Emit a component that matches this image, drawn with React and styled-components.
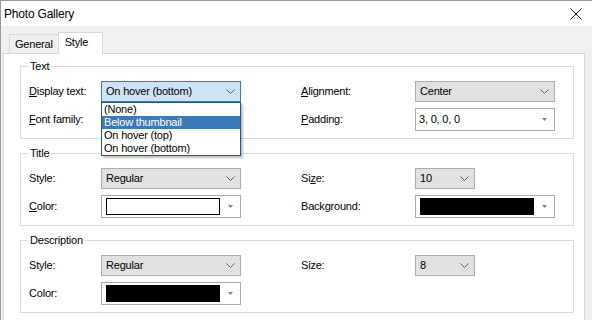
import React from "react";
import styled, { createGlobalStyle } from "styled-components";

const GlobalStyle = createGlobalStyle`
  html, body {
    margin: 0;
    padding: 0;
    background: #f0f0f0;
  }
  body {
    font-family: "Liberation Sans", Arial, sans-serif;
    font-size: 11px;
    letter-spacing: -0.2px;
    color: #000;
  }
`;

const Window = styled.div`
  width: 592px;
  height: 320px;
  box-sizing: border-box;
  overflow: hidden;
  background: #f0f0f0;
  border-left: 1px solid #9a9a9a;
  border-top: 1px solid #9a9a9a;
  display: flex;
  flex-direction: column;
`;

const TitleBar = styled.div`
  height: 25px;
  flex: none;
  background: #fff;
  display: flex;
  align-items: center;
  justify-content: space-between;
  padding: 0 10px 0 3px;
  font-size: 12px;
`;

const Body = styled.div`
  flex: 1;
  display: flex;
  flex-direction: column;
  padding: 6px 7px 0 2px;
`;

const TabStrip = styled.div`
  display: flex;
  align-items: flex-end;
  padding-left: 6px;
  position: relative;
  z-index: 1;
`;

const Tab = styled.div`
  box-sizing: border-box;
  border: 1px solid #d9d9d9;
  border-bottom: none;
  display: flex;
  align-items: center;
  height: ${(p) => (p.$active ? "22px" : "19px")};
  margin-bottom: ${(p) => (p.$active ? "-1px" : "0")};
  margin-left: ${(p) => (p.$active ? "-1px" : "0")};
  background: ${(p) => (p.$active ? "#fff" : "#f0f0f0")};
  padding-bottom: ${(p) => (p.$active ? "3px" : "0")};
  padding-right: ${(p) => (p.$active ? "14px" : "5px")};
  padding-left: ${(p) => (p.$active ? "6px" : "5px")};
`;

const Panel = styled.div`
  flex: 1;
  background: #fff;
  border: 1px solid #d9d9d9;
  border-bottom: none;
  padding: 6px 10px 0 16px;
  display: flex;
  flex-direction: column;
  gap: 8px;
`;

const Group = styled.fieldset`
  margin: 0;
  border: 1px solid #dcdcdc;
  padding: 7px 0 8px 8px;
  min-width: 0;
`;

const Caption = styled.legend`
  padding: 0 2px;
  margin-left: -1px;
  line-height: 13px;
`;

const Rows = styled.div`
  display: grid;
  grid-template-columns: 72px 200px 114px 140px;
  grid-auto-rows: 22px;
  row-gap: 6px;
  align-items: center;
`;

const Label = styled.span`
  white-space: nowrap;
  u {
    text-decoration: underline;
    text-underline-offset: 1px;
  }
`;

const Combo = styled.div`
  position: relative;
  box-sizing: border-box;
  width: ${(p) => p.$w || 140}px;
  height: ${(p) => p.$h || 21}px;
  display: flex;
  align-items: center;
  justify-content: space-between;
  padding: 0 5px 0 4px;
  border: 1px solid ${(p) => (p.$focus ? "#3a7bbf" : "#adadad")};
  background: ${(p) => (p.$focus ? "#cce4f7" : "#e1e1e1")};
`;

const EditCombo = styled.div`
  box-sizing: border-box;
  width: 140px;
  height: 23px;
  display: flex;
  align-items: center;
  gap: 8px;
  padding: 0 7px 0 3px;
  border: 1px solid #a9a9a9;
  background: #fff;
`;

const EditText = styled.span`
  flex: 1;
`;

const Swatch = styled.span`
  flex: 1;
  height: 15px;
  border: 1px solid #000;
  background: ${(p) => p.$color};
  margin-left: 1px;
`;

const DropList = styled.div`
  position: absolute;
  left: -1px;
  top: 20px;
  width: 140px;
  box-sizing: border-box;
  border: 1px solid #27557f;
  background: #fff;
  box-shadow: 2px 2px 2px rgba(0, 0, 0, 0.25);
  z-index: 5;
`;

const DropItem = styled.div`
  height: 13px;
  line-height: 13px;
  padding-left: 2px;
  color: ${(p) => (p.$sel ? "#fff" : "#000")};
  background: ${(p) => (p.$sel ? "#3b79b7" : "transparent")};
`;

const Chevron = () => (
  <svg width="9" height="5" viewBox="0 0 9 5">
    <polyline points="0.5,0.5 4.5,4.5 8.5,0.5" fill="none" stroke="#606060" strokeWidth="1" />
  </svg>
);

const Caret = () => (
  <svg width="5" height="3" viewBox="0 0 5 3">
    <polygon points="0,0 5,0 2.5,3" fill="#808080" />
  </svg>
);

const CloseIcon = () => (
  <svg width="12" height="12" viewBox="0 0 12 12">
    <path d="M0.5 0.5 L11.5 11.5 M11.5 0.5 L0.5 11.5" stroke="#111" strokeWidth="1" />
  </svg>
);

const Select = ({ value, w, focus, children }) => (
  <Combo $w={w} $focus={focus}>
    <span>{value}</span>
    <Chevron />
    {children}
  </Combo>
);

const ColorPick = ({ color }) => (
  <EditCombo>
    <Swatch $color={color} />
    <Caret />
  </EditCombo>
);

const options = ["(None)", "Below thumbnail", "On hover (top)", "On hover (bottom)"];

export default function App() {
  return (
    <>
      <GlobalStyle />
      <Window>
        <TitleBar>
          <span>Photo Gallery</span>
          <CloseIcon />
        </TitleBar>
        <Body>
          <TabStrip>
            <Tab>General</Tab>
            <Tab $active>Style</Tab>
          </TabStrip>
          <Panel>
            <Group>
              <Caption>Text</Caption>
              <Rows>
                <Label><u>D</u>isplay text:</Label>
                <div>
                  <Select value="On hover (bottom)" focus>
                    <DropList>
                      {options.map((o) => (
                        <DropItem key={o} $sel={o === "Below thumbnail"}>{o}</DropItem>
                      ))}
                    </DropList>
                  </Select>
                </div>
                <Label><u>A</u>lignment:</Label>
                <Select value="Center" />
                <Label><u>F</u>ont family:</Label>
                <div />
                <Label><u>P</u>adding:</Label>
                <EditCombo>
                  <EditText>3, 0, 0, 0</EditText>
                  <Caret />
                </EditCombo>
              </Rows>
            </Group>
            <Group>
              <Caption>Title</Caption>
              <Rows>
                <Label>Style:</Label>
                <Select value="Regular" />
                <Label>Si<u>z</u>e:</Label>
                <Select value="10" w={60} />
                <Label><u>C</u>olor:</Label>
                <ColorPick color="#fff" />
                <Label>Background:</Label>
                <ColorPick color="#000" />
              </Rows>
            </Group>
            <Group>
              <Caption>Description</Caption>
              <Rows>
                <Label>Style:</Label>
                <Select value="Regular" />
                <Label>Size:</Label>
                <Select value="8" w={60} />
                <Label>Color:</Label>
                <ColorPick color="#000" />
              </Rows>
            </Group>
          </Panel>
        </Body>
      </Window>
    </>
  );
}
